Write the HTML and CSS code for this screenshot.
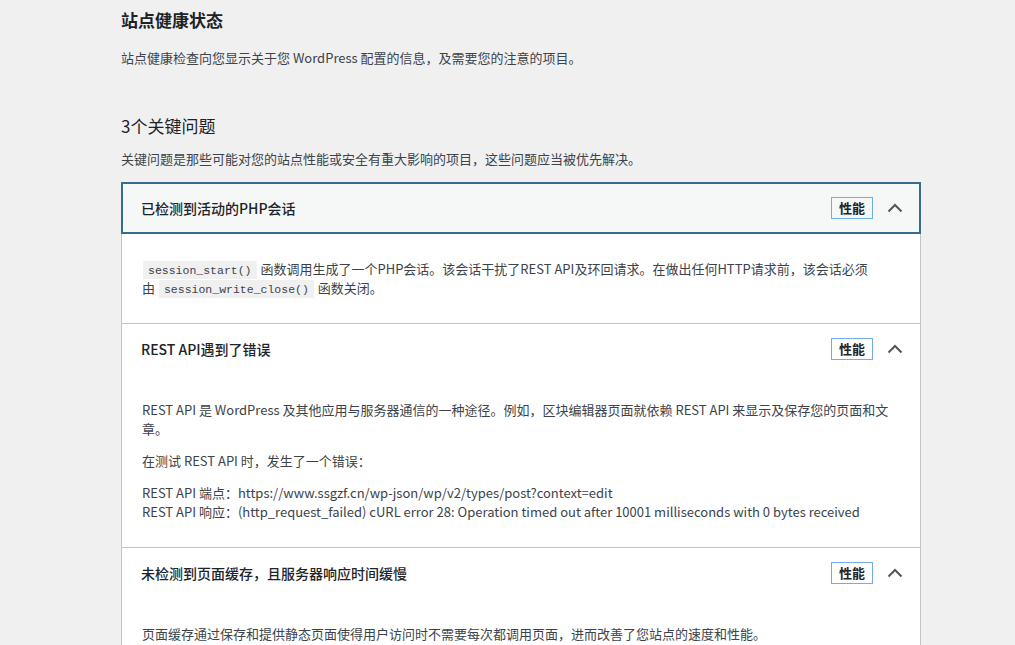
FILE: index.html
```html
<!DOCTYPE html>
<html lang="zh-CN">

<head>
  <meta charset="utf-8">
  <meta name="viewport" content="width=device-width, initial-scale=1.0">
  <link rel="stylesheet" href="styles.css">
</head>

<body>
  <div class="wrap">
    <h1 class="page-title">站点健康状态</h1>
    <p class="page-desc">站点健康检查向您显示关于您 WordPress 配置的信息，及需要您的注意的项目。</p>

    <h2 class="issues-title">3个关键问题</h2>
    <p class="issues-desc">关键问题是那些可能对您的站点性能或安全有重大影响的项目，这些问题应当被优先解决。</p>

    <div class="accordion">
      <h4 class="accordion-heading">
        <button class="trigger focused" type="button">
          <span class="title">已检测到活动的PHP会话</span>
          <span class="badge">性能</span>
          <svg class="icon" width="16" height="10" viewBox="0 0 16 10"><polyline points="1.5,8.5 8,2 14.5,8.5" /></svg>
        </button>
      </h4>
      <div class="panel">
        <p><code>session_start()</code> 函数调用生成了一个PHP会话。该会话干扰了REST API及环回请求。在做出任何HTTP请求前，该会话必须<br>由 <code>session_write_close()</code> 函数关闭。</p>
      </div>

      <h4 class="accordion-heading">
        <button class="trigger" type="button">
          <span class="title">REST API遇到了错误</span>
          <span class="badge">性能</span>
          <svg class="icon" width="16" height="10" viewBox="0 0 16 10"><polyline points="1.5,8.5 8,2 14.5,8.5" /></svg>
        </button>
      </h4>
      <div class="panel">
        <p>REST API 是 WordPress 及其他应用与服务器通信的一种途径。例如，区块编辑器页面就依赖 REST API 来显示及保存您的页面和文章。</p>
        <p>在测试 REST API 时，发生了一个错误：</p>
        <p>REST API 端点：https://www.ssgzf.cn/wp-json/wp/v2/types/post?context=edit<br>REST API 响应：(http_request_failed) cURL error 28: Operation timed out after 10001 milliseconds with 0 bytes received</p>
      </div>

      <h4 class="accordion-heading">
        <button class="trigger" type="button">
          <span class="title">未检测到页面缓存，且服务器响应时间缓慢</span>
          <span class="badge">性能</span>
          <svg class="icon" width="16" height="10" viewBox="0 0 16 10"><polyline points="1.5,8.5 8,2 14.5,8.5" /></svg>
        </button>
      </h4>
      <div class="panel">
        <p>页面缓存通过保存和提供静态页面使得用户访问时不需要每次都调用页面，进而改善了您站点的速度和性能。</p>
      </div>
    </div>
  </div>
</body>

</html>
```

FILE: styles.css
```css
* {
  box-sizing: border-box;
}

body {
  margin: 0;
  background-color: #f0f0f1;
  color: #3c434a;
  font-family: "Noto Sans CJK SC", "Noto Sans", sans-serif;
  font-size: 13px;
  line-height: 1.5;
}

.wrap {
  width: 800px;
  margin-left: 121px;
  padding-top: 8px;
}

.page-title {
  margin: 0;
  font-size: 17px;
  line-height: 24px;
  font-weight: 700;
  color: #1d2327;
}

.page-desc {
  margin: 16px 0 0;
  line-height: 20px;
}

.issues-title {
  margin: 46px 0 0;
  font-size: 17px;
  line-height: 24px;
  font-weight: 400;
  color: #1d2327;
}

.issues-desc {
  margin: 11px 0 0;
  line-height: 20px;
}

.accordion {
  margin-top: 13px;
  border: 1px solid #c3c4c7;
  background-color: #fff;
}

.accordion-heading {
  margin: 0;
  border-top: 1px solid #c3c4c7;
}

.accordion-heading:first-child {
  border-top: none;
}

.trigger {
  display: flex;
  align-items: center;
  width: 100%;
  height: 50px;
  padding: 0 10px 0 19px;
  border: none;
  background-color: #fff;
  color: #1d2327;
  font-family: inherit;
  font-size: 14px;
  text-align: left;
  cursor: pointer;
}

.trigger.focused {
  background-color: #f6f7f7;
  outline: 2px solid #3b6b8b;
  outline-offset: -1px;
}

.title {
  flex: 1;
  font-weight: 500;
}

.badge {
  padding: 0 7px;
  border: 1px solid #72aee6;
  color: #1d2327;
  font-size: 13px;
  font-weight: 600;
  line-height: 20px;
}

.icon {
  margin-left: 14px;
  margin-right: 7px;
  fill: none;
  stroke: #50575e;
  stroke-width: 2;
}

.panel {
  padding: 13px 19px 13px 20px;
}

.panel p {
  margin: 13px 0;
  line-height: 19px;
}

code {
  padding: 3px 5px 2px;
  margin: 0 1px;
  background-color: #f0f0f1;
  font-family: "Liberation Mono", monospace;
  font-size: 11.5px;
  line-height: 1;
}
```
